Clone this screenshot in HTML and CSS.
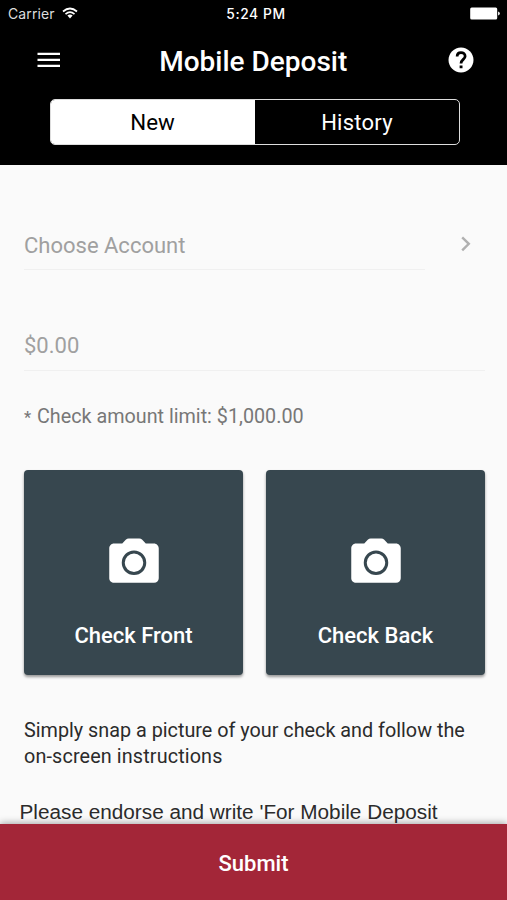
FILE: index.html
```html
<!DOCTYPE html>
<html lang="en">
<head>
<meta charset="utf-8">
<title>Mobile Deposit</title>
<link rel="stylesheet" href="styles.css">
</head>
<body>
<div class="app">
  <header class="header">
    <div class="status">
      <div class="carrier"><span class="carrier-name">Carrier</span>
        <svg class="wifi" width="16" height="12" viewBox="0 0 16 12" fill="none" stroke="#fff" stroke-width="1.7"><path d="M1 4.5Q8-1.5 15 4.5M3.5 7.1Q8 3.3 12.5 7.1"/><path d="M5.4 8.6Q8 6.6 10.6 8.6L8 11.5Z" fill="#fff" stroke="none"/></svg>
      </div>
      <span class="time">5:24 PM</span>
      <svg class="battery" width="31" height="13" viewBox="0 0 31 13" fill="#fff"><rect x="1.2" y="0.5" width="27" height="12" rx="1.5"/><path d="M29.1 4.5Q30.8 5 30.8 6.5T29.1 8.5Z"/></svg>
    </div>
    <div class="nav">
      <svg class="menu" width="24" height="17" viewBox="0 0 24 17" fill="#fff"><path d="M.5.7h22.5v2.3H.5zM.5 6.7h22.5v2.3H.5zM.5 12.7h22.5v2.3H.5z"/></svg>
      <h1 class="title">Mobile Deposit</h1>
      <svg class="help" width="30" height="30" viewBox="0 0 24 24" fill="#fff"><path d="M12 2C6.48 2 2 6.48 2 12s4.48 10 10 10 10-4.48 10-10S17.52 2 12 2z"/><path d="M8.9 9.2C8.9 7.2 10.1 6 12 6s3.3 1.2 3.3 3c0 2.4-3.3 2.7-3.3 5.8" fill="none" stroke="#000" stroke-width="2.2"/><path d="M10.9 16.4h2.3v2.2h-2.3z" fill="#000"/></svg>
    </div>
    <div class="segments">
      <div class="segment active"><span class="new">New</span></div>
      <div class="segment"><span class="history">History</span></div>
    </div>
  </header>
  <main class="content">
    <div class="account">
      <div class="field"><span class="choose">Choose Account</span></div>
      <svg class="chevron" width="10" height="16" viewBox="0 0 10 16" fill="none" stroke="#b0b0b0" stroke-width="2.4"><path d="M1.2 1.3L7.8 7.8L1.2 14.4"/></svg>
    </div>
    <div class="field amount"><span class="value">$0.00</span></div>
    <p class="limit"><span class="star">*</span><span class="limit-text">Check amount limit: $1,000.00</span></p>
    <div class="checks">
      <div class="check">
        <svg class="camera" width="60" height="60" viewBox="0 0 24 24" fill="#fff"><path d="M9.9 3Q9.2 3 8.7 3.5L7.3 5H4c-1.1 0-1.9.9-1.9 2v11.9c0 1.1.9 1.8 1.9 1.8h16c1.1 0 1.9-.8 1.9-1.8V7c0-1.1-.9-2-1.9-2h-3.3L15.3 3.5Q14.8 3 14.1 3z"/><circle cx="12" cy="12.7" r="4.3" stroke="#37474f" stroke-width="1.2"/></svg>
        <span class="front">Check Front</span>
      </div>
      <div class="check">
        <svg class="camera" width="60" height="60" viewBox="0 0 24 24" fill="#fff"><path d="M9.9 3Q9.2 3 8.7 3.5L7.3 5H4c-1.1 0-1.9.9-1.9 2v11.9c0 1.1.9 1.8 1.9 1.8h16c1.1 0 1.9-.8 1.9-1.8V7c0-1.1-.9-2-1.9-2h-3.3L15.3 3.5Q14.8 3 14.1 3z"/><circle cx="12" cy="12.7" r="4.3" stroke="#37474f" stroke-width="1.2"/></svg>
        <span class="back">Check Back</span>
      </div>
    </div>
    <p class="hint"><span class="hint-1">Simply snap a picture of your check and follow the</span><br><span class="hint-2">on-screen instructions</span></p>
    <p class="endorse"><span class="endorse-text">Please endorse and write 'For Mobile Deposit</span></p>
  </main>
  <div class="submit"><span class="submit-text">Submit</span></div>
</div>
</body>
</html>
```
FILE: styles.css
```css
* { box-sizing: border-box; }
body { margin: 0; font-family: Roboto, sans-serif; background: #fafafa; }
p, h1 { margin: 0; }
svg { display: block; flex: none; }
.app { width: 507px; height: 900px; display: flex; flex-direction: column; overflow: hidden; }
.header { flex: none; height: 164.5px; background: #000; color: #fff; }
.status { height: 28px; display: grid; grid-template-columns: 1fr auto 1fr; align-items: center; padding: 0 7px 0 8px; font-family: Inter, sans-serif; font-size: 14px; line-height: 28px; }
.carrier { display: flex; align-items: center; gap: 7px; }
.carrier-name { color: #ddd; letter-spacing: 0.1px; }
.wifi { margin-bottom: 2px; }
.time { font-weight: 500; font-size: 13.8px; letter-spacing: 0.6px; margin-left: 4px; }
.battery { justify-self: end; margin-bottom: 1px; }
.nav { height: 70.5px; display: flex; align-items: center; justify-content: space-between; padding: 0 31px 6px 37px; }
.title { font-size: 28px; font-weight: 500; line-height: 36px; margin-top: 3px; }
.help { margin: 0 0.5px 1px 0; }
.segments { display: flex; width: 410px; height: 46.5px; margin-left: 49.5px; border: 1.5px solid #ddd; border-radius: 5px; overflow: hidden; }
.segment { flex: 1; display: flex; align-items: center; justify-content: center; font-size: 22px; padding-top: 1px; }
.new { font-size: 22.3px; }
.history { letter-spacing: 0.25px; margin-left: 1px; }
.active { background: #fff; color: #000; }
.content { flex: 1; min-height: 0; overflow: hidden; padding: 55px 22px 0 24px; color: #2b2b2b; }
.account { display: flex; align-items: center; justify-content: space-between; padding-right: 14px; }
.account .field { width: 401px; }
.chevron { margin-bottom: 2px; }
.field { height: 50.5px; border-bottom: 1.5px solid #f0f0f0; font-size: 22px; line-height: 52px; color: #a0a0a0; }
.amount { height: 51.5px; margin-top: 49.5px; }
.limit { display: flex; gap: 5px; margin-top: 33px; font-size: 19.75px; line-height: 26px; color: #777; }
.star { width: 8px; font-size: 16px; font-weight: 500; line-height: 28px; height: 26px; }
.checks { display: grid; grid-template-columns: 1fr 1fr; gap: 23px; margin-top: 39.5px; }
.check { height: 205px; background: #37474f; border-radius: 4px; box-shadow: 0 2px 3px rgba(0,0,0,.4); color: #fff; font-size: 22px; font-weight: 500; line-height: 30px; display: flex; flex-direction: column; align-items: center; padding-top: 61px; }
.camera { margin-bottom: 30px; }
.hint { margin-top: 43px; font-size: 19.8px; line-height: 26px; }
.hint-2 { letter-spacing: 0.13px; }
.endorse { margin: 29px 0 0 -4.5px; font-family: "Liberation Sans", sans-serif; font-size: 20.75px; line-height: 26px; white-space: nowrap; }
.submit { flex: none; height: 76px; background: #a32638; color: #fff; display: flex; align-items: center; justify-content: center; font-size: 22px; font-weight: 500; box-shadow: 0 -1px 7px rgba(0,0,0,.35); position: relative; padding-top: 2px; }
```
